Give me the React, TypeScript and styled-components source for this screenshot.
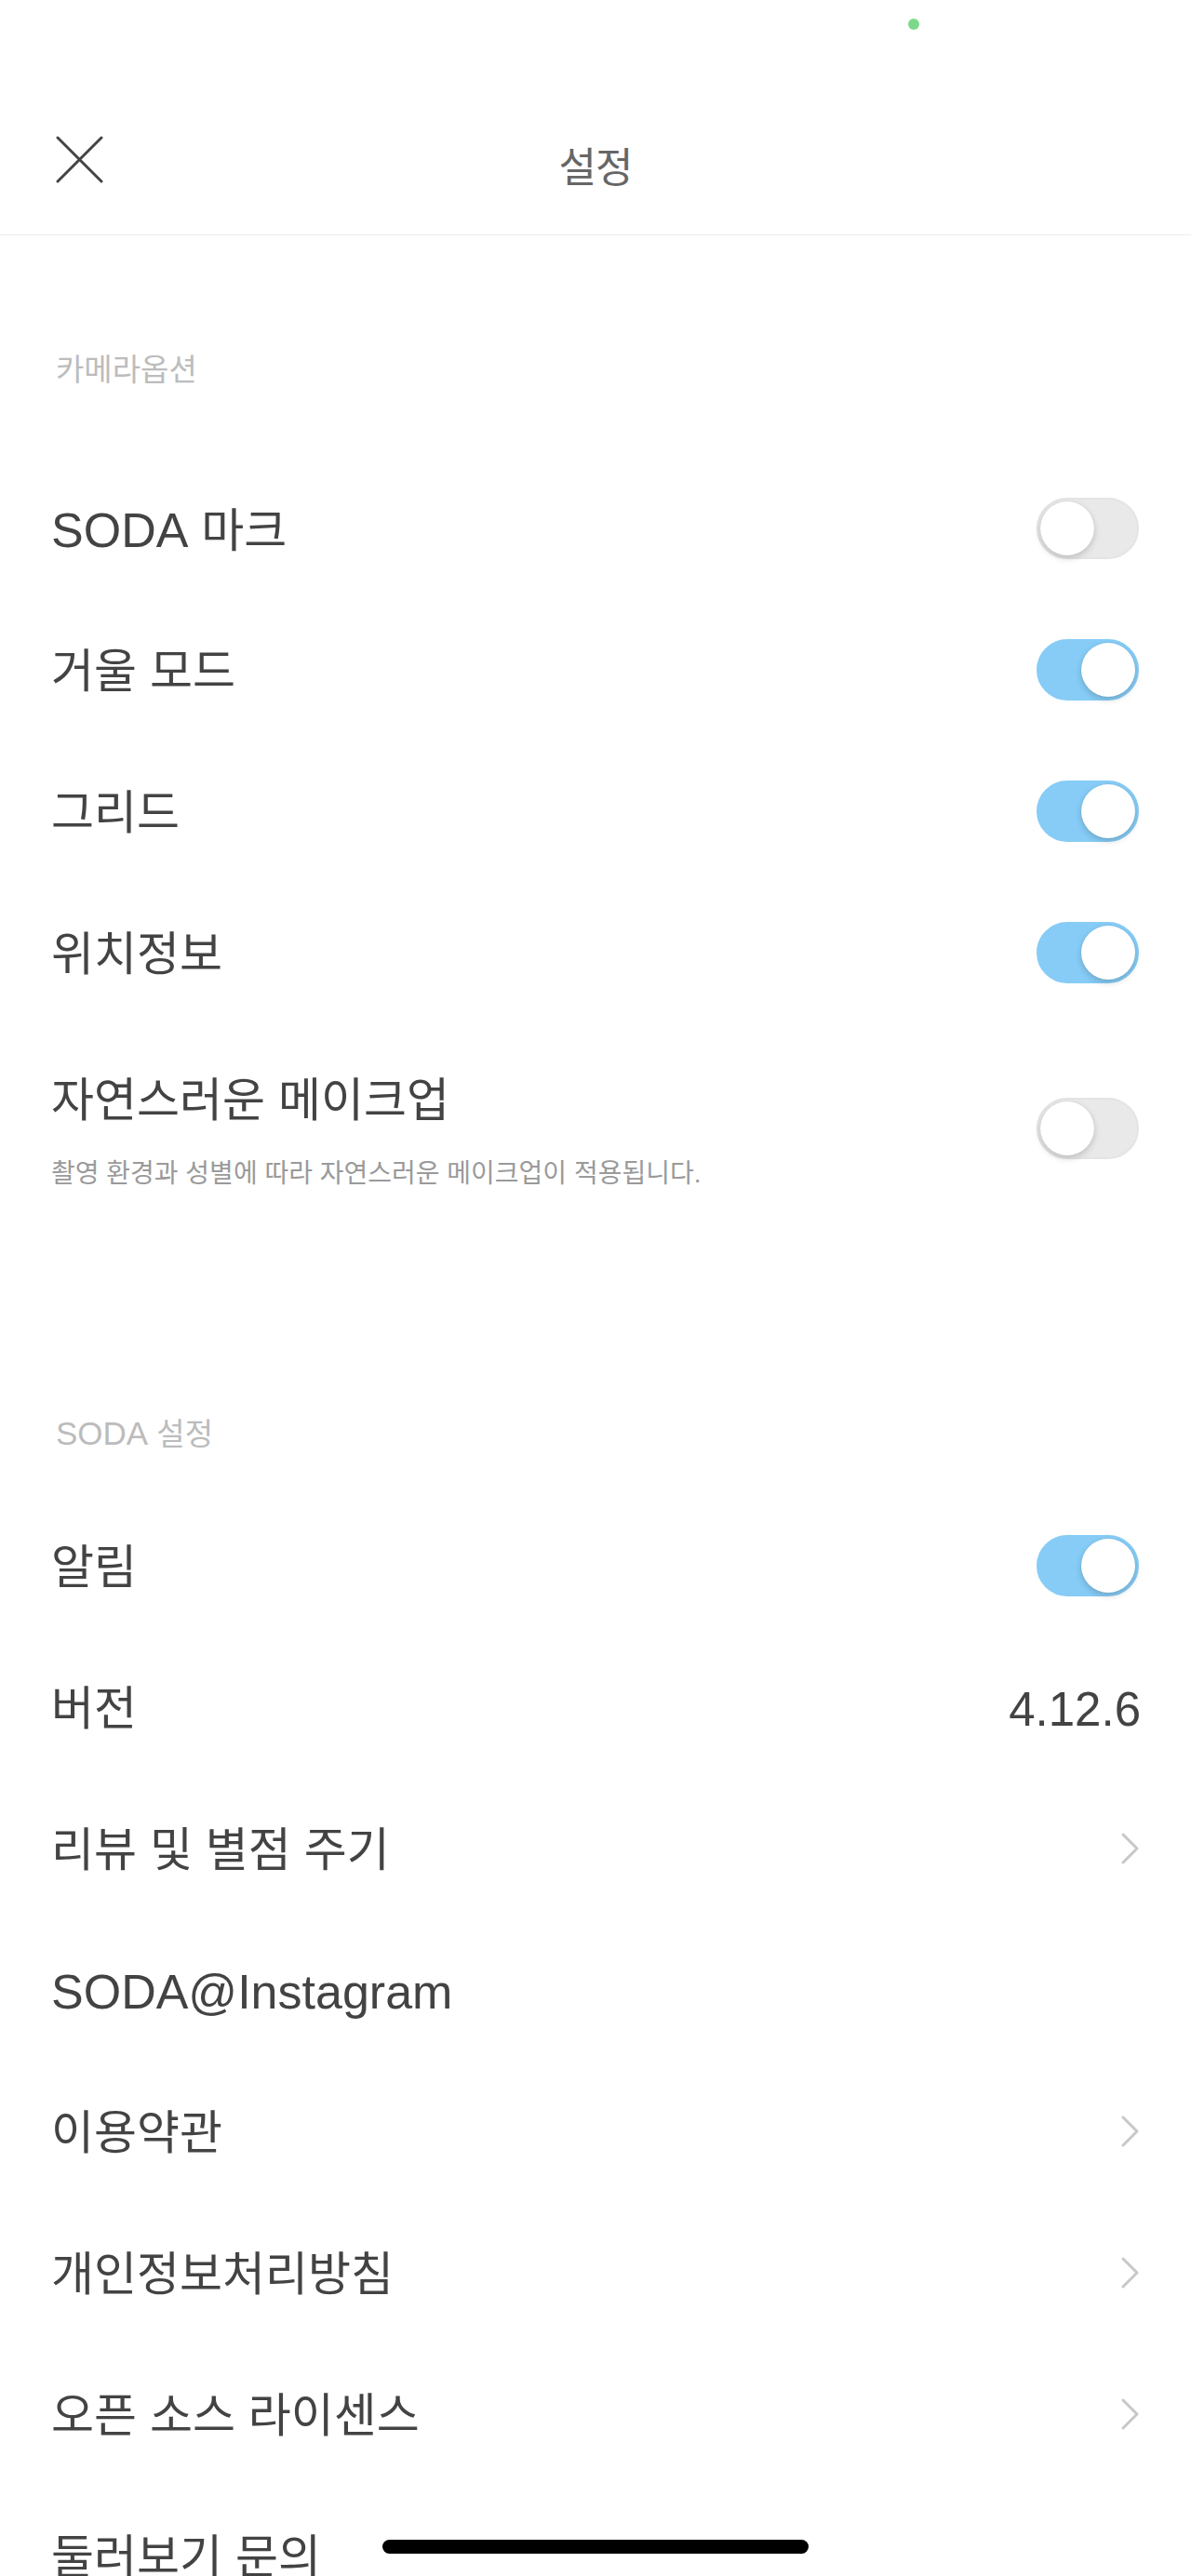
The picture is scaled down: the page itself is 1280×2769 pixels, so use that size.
import { createGlobalStyle, styled } from "styled-components";

const GlobalStyle = createGlobalStyle`
  html, body {
    margin: 0;
    padding: 0;
    background: #ffffff;
  }
  body {
    font-family: "Liberation Sans", "Noto Sans CJK KR", sans-serif;
    color: #444444;
  }
`;

const Page = styled.div`
  position: relative;
  width: 1280px;
  height: 2769px;
  overflow: hidden;
  background: #ffffff;
`;

const StatusBar = styled.div`
  height: 52px;
  display: flex;
  align-items: center;
  justify-content: flex-end;
  padding-right: 292px;
`;

const CameraDot = styled.span`
  width: 12px;
  height: 12px;
  border-radius: 50%;
  background: #7ed88a;
`;

const Header = styled.header`
  height: 162px;
  padding-top: 38px;
  display: grid;
  grid-template-columns: 1fr auto 1fr;
  align-items: center;
  border-bottom: 1px solid #ededed;
`;

const CloseButton = styled.button`
  justify-self: start;
  margin-left: 60px;
  width: 51px;
  height: 51px;
  padding: 0;
  border: 0;
  background: none;
  display: flex;
  align-items: center;
  justify-content: center;
`;

const Title = styled.h1`
  margin: 12px 0 0;
  font-size: 44px;
  font-weight: 400;
  letter-spacing: -1px;
  color: #666666;
`;

const SectionLabel = styled.div<{ top: number; bottom: number }>`
  padding: ${(p) => p.top}px 60px ${(p) => p.bottom}px;
  line-height: 40px;
  font-size: 33px;
  color: #bcbcbc;
`;

const Row = styled.div<{ tall?: boolean }>`
  min-height: ${(p) => (p.tall ? 224 : 152)}px;
  box-sizing: border-box;
  padding: 0 56px 0 55px;
  display: flex;
  align-items: center;
  justify-content: space-between;
`;

const RowText = styled.div<{ tall?: boolean }>`
  display: flex;
  flex-direction: column;
  gap: 31px;
  padding: ${(p) => (p.tall ? "49px 0 46px" : "0")};
`;

const Label = styled.span`
  padding-top: 4px;
  font-size: 50px;
  line-height: 60px;
  color: #434343;
`;

const Latin = styled.span<{ size?: number }>`
  font-size: ${(p) => p.size ?? 52}px;
`;

const Hint = styled.span`
  font-size: 28px;
  line-height: 36px;
  color: #9a9a9a;
`;

const Value = styled.span`
  margin-right: -2px;
  padding-top: 4px;
  font-size: 51px;
  color: #434343;
`;

const Track = styled.span<{ on: boolean }>`
  position: relative;
  width: 110px;
  height: 66px;
  border-radius: 33px;
  box-sizing: border-box;
  background: ${(p) => (p.on ? "#86ccf6" : "#e9e9e9")};
  border: 2px solid ${(p) => (p.on ? "#86ccf6" : "#e4e4e4")};
  flex-shrink: 0;
`;

const Knob = styled.span<{ on: boolean }>`
  position: absolute;
  top: 2px;
  left: ${(p) => (p.on ? "46px" : "2px")};
  width: 58px;
  height: 58px;
  border-radius: 50%;
  background: #ffffff;
  box-shadow: 0 3px 7px rgba(0, 0, 0, 0.18), 0 0 0 0.5px rgba(0, 0, 0, 0.06);
`;

const HomeIndicator = styled.div`
  position: absolute;
  left: 50%;
  bottom: 24px;
  transform: translateX(-50%);
  width: 458px;
  height: 15px;
  border-radius: 8px;
  background: #000000;
`;

const Toggle = ({ on }: { on: boolean }) => (
  <Track on={on}>
    <Knob on={on} />
  </Track>
);

const Chevron = () => (
  <svg width="22" height="36" viewBox="0 0 22 36" style={{ marginRight: -2 }}>
    <polyline
      points="3,3 18,18 3,33"
      fill="none"
      stroke="#c8c8c8"
      strokeWidth="3"
      strokeLinecap="round"
      strokeLinejoin="round"
    />
  </svg>
);

const CloseIcon = () => (
  <svg width="51" height="51" viewBox="0 0 51 51">
    <path
      d="M2 2 L49 49 M49 2 L2 49"
      stroke="#444444"
      strokeWidth="3"
      strokeLinecap="round"
    />
  </svg>
);

const cameraOptions = [
  { label: <><Latin>SODA</Latin> 마크</>, on: false },
  { label: "거울 모드", on: true },
  { label: "그리드", on: true },
  { label: "위치정보", on: true },
];

const linkRows = ["리뷰 및 별점 주기", "SODA@Instagram", "이용약관", "개인정보처리방침", "오픈 소스 라이센스"];

export default function App() {
  return (
    <Page>
      <GlobalStyle />
      <StatusBar>
        <CameraDot />
      </StatusBar>
      <Header>
        <CloseButton aria-label="닫기">
          <CloseIcon />
        </CloseButton>
        <Title>설정</Title>
        <span />
      </Header>

      <SectionLabel top={125} bottom={74}>카메라옵션</SectionLabel>
      {cameraOptions.map((opt, i) => (
        <Row key={i}>
          <Label>{opt.label}</Label>
          <Toggle on={opt.on} />
        </Row>
      ))}
      <Row tall>
        <RowText tall>
          <Label>자연스러운 메이크업</Label>
          <Hint>촬영 환경과 성별에 따라 자연스러운 메이크업이 적용됩니다.</Hint>
        </RowText>
        <Toggle on={false} />
      </Row>

      <SectionLabel top={195} bottom={45}>
        <Latin size={35}>SODA</Latin> 설정
      </SectionLabel>
      <Row>
        <Label>알림</Label>
        <Toggle on />
      </Row>
      <Row>
        <Label>버전</Label>
        <Value>4.12.6</Value>
      </Row>
      {linkRows.map((text) => (
        <Row key={text}>
          <Label>{text.startsWith("SODA") ? <Latin>{text}</Latin> : text}</Label>
          {text.startsWith("SODA") ? null : <Chevron />}
        </Row>
      ))}
      <Row>
        <Label>둘러보기 문의</Label>
      </Row>
      <HomeIndicator />
    </Page>
  );
}
